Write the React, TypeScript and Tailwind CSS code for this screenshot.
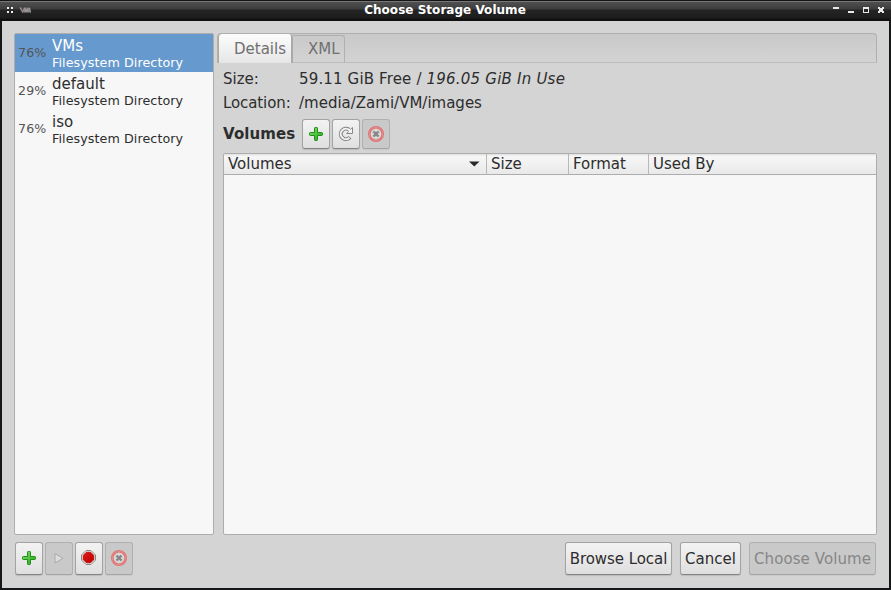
import React from "react";

const raised =
  "border border-[#a3a3a3] border-b-[#858585] bg-linear-to-b from-[#f3f3f3] to-[#dfdfdf] shadow-[0_1px_1px_rgba(0,0,0,0.12)]";
const flat = "border border-[#b0b0b0] border-b-[#a5a5a5] bg-[#c9c9c9] shadow-[0_1px_1px_rgba(0,0,0,0.06)]";

function PlusIcon() {
  return (
    <svg width="16" height="16" viewBox="0 0 16 16">
      <defs>
        <linearGradient id="plus" x1="0" y1="0" x2="1" y2="1">
          <stop offset="0" stopColor="#8be070" />
          <stop offset="1" stopColor="#1fa01a" />
        </linearGradient>
      </defs>
      <path
        d="M6.5 2.2Q6.5 1.5 7.2 1.5h1.600Q9.5 1.5 9.5 2.2V6.5h4.100q.9 0 .9.7v1.600q0 .7-.9.7H9.5v4.300q0 .7-.7.7H7.200q-.7 0-.7-.7V9.5H2.400q-.9 0-.9-.7V7.2q0-.7.9-.7h4.100z"
        fill="url(#plus)"
        stroke="#17930f"
      />
    </svg>
  );
}

function RefreshIcon() {
  return (
    <svg width="16" height="16" viewBox="0 0 16 16" fill="none">
      <path d="M12 11.300A5.200 5.200 0 1 1 11 3.700" stroke="#868686" strokeWidth="4" />
      <path d="M8.700 7.500h5.800V1.500L12.500 3.200 10.800 5.400z" fill="#f2f2f2" stroke="#868686" strokeLinejoin="round" />
      <path d="M11.400 11.800A5.200 5.200 0 1 1 11.400 4.100l1.300 1.500" stroke="#f2f2f2" strokeWidth="2" />
    </svg>
  );
}

function DeleteIcon() {
  return (
    <svg width="16" height="16" viewBox="0 0 16 16" fill="none">
      <circle cx="8" cy="8" r="6.700" fill="#d9d6d6" stroke="#df7272" strokeWidth="2.600" />
      <circle cx="8" cy="8" r="6.700" stroke="#e79696" strokeWidth="0.7" />
      <path d="M5.500 5.500l5 5M10.500 5.500l-5 5" stroke="#858585" strokeWidth="2.400" />
    </svg>
  );
}

function PlayIcon() {
  return (
    <svg width="16" height="16" viewBox="0 0 16 16">
      <path d="M4 3.500v9.500L12 8.300z" fill="#dcdcdc" stroke="#aaa" strokeLinejoin="round" />
    </svg>
  );
}

function StopIcon() {
  return (
    <svg width="16" height="16" viewBox="0 0 16 16">
      <defs>
        <linearGradient id="stop" x1="0" y1="0" x2="1" y2="1">
          <stop offset="0" stopColor="#e81717" />
          <stop offset="1" stopColor="#b80000" />
        </linearGradient>
      </defs>
      <path d="M5 .5h5l4.500 4.500v5L10 14.500H5L.5 10V5z" fill="#f3f3f0" stroke="#858780" />
      <path d="M5.400 2.200h4.200l3.200 3.200v4.200l-3.200 3.200H5.400l-3.200-3.200V5.400z" fill="url(#stop)" stroke="#ad0000" strokeWidth="0.800" />
    </svg>
  );
}

function IconButton({ tall, disabled, children }: { tall?: boolean; disabled?: boolean; children: React.ReactNode }) {
  return (
    <button
      disabled={disabled}
      className={`flex w-7 items-center justify-center rounded-[3px] ${tall ? "h-[33px] pb-px" : "h-[30px]"} ${disabled ? flat : raised}`}
    >
      {children}
    </button>
  );
}

function TextButton({ width, disabled, children }: { width: string; disabled?: boolean; children: string }) {
  return (
    <button
      disabled={disabled}
      className={`flex h-[33px] items-center justify-center rounded-[3px] pt-px whitespace-nowrap ${width} ${disabled ? `${flat} text-[#868686]` : raised}`}
    >
      {children}
    </button>
  );
}

const pools = [
  { used: "76%", name: "VMs", selected: true },
  { used: "29%", name: "default", selected: false },
  { used: "76%", name: "iso", selected: false },
];

function TitleBar() {
  return (
    <header className="flex h-[21px] shrink-0 items-center justify-between bg-[linear-gradient(#151515_0_1px,#77777a_1px_2px,#505050_2px,#3d3d3d_9px,#242424_10px,#1d1d1d_18px,#111_19px)] pr-[6px] pl-[7px]">
      <svg width="175" height="21" viewBox="0 0 175 21" shapeRendering="crispEdges">
        <path d="M0 7h2v2H0zM4 7h2v2H4zM0 11h2v2H0zM4 11h2v2H4z" fill="#eee" />
        <g shapeRendering="auto" fill="none">
          <path d="M12.500 7.500h2l1.500 3.500 1.500-3.500h5.500l1 5h-8.500z" fill="#777" />
          <path d="M13 7.500l2.500 4.500 2-4.500" stroke="#9b8585" strokeWidth="1.200" />
          <path d="M18 12.500v-4l1.500 3 1.500-3v4M22.500 8l1 4.500" stroke="#aaa" strokeWidth="0.800" />
        </g>
      </svg>
      <h1 className="-translate-x-px -translate-y-px text-[12px] font-bold leading-5 tracking-[0.030px] text-white">Choose Storage Volume</h1>
      <svg width="175" height="21" viewBox="0 0 175 21" shapeRendering="crispEdges" fill="#e8e8e8">
        <path d="M123 7h6v2h-6zM138 11h6v2h-6zM153 7h6v6h-6z" />
        <path d="M154 9h4v3h-4z" fill="#252525" />
        <path d="M168 7h2v1h2V7h2v2h-1v2h1v2h-2v-1h-2v1h-2v-2h1V9h-1z" />
      </svg>
    </header>
  );
}

function Sidebar() {
  return (
    <aside className="flex w-[200px] shrink-0 flex-col">
      <ul className="h-[502px] rounded-[2px] border border-[#adadad] bg-[#f7f7f7]">
        {pools.map((p) => (
          <li key={p.name} className={`flex h-[38px] items-center pl-[3px] ${p.selected ? "bg-[#6699cd] text-white" : ""}`}>
            <span className="w-[34px] text-[12.600px] tracking-[0.150px] text-[#555]">{p.used}</span>
            <div className="pt-[2px]">
              <div className="h-[20px] text-[15px] leading-[20px]">{p.name}</div>
              <div className="h-[16px] text-[12.700px] leading-[14px] tracking-[0.080px]">Filesystem Directory</div>
            </div>
          </li>
        ))}
      </ul>
      <div className="mt-[7px] ml-px flex gap-[2px]">
        <IconButton tall><PlusIcon /></IconButton>
        <IconButton tall disabled><PlayIcon /></IconButton>
        <IconButton tall><StopIcon /></IconButton>
        <IconButton tall disabled><DeleteIcon /></IconButton>
      </div>
    </aside>
  );
}

function Details() {
  return (
    <main className="ml-[3px] flex w-[660px] flex-col">
      <nav className="flex h-[30px] rounded-t-[4px] border border-[#b0b0b0] border-b-[#bdbdbd] bg-linear-to-b from-[#c9c9c9] to-[#d3d3d3] text-[#707070]">
        <div className="h-[29px] w-[75px] rounded-t-[4px] border-x border-r-2 border-[#aaa] bg-linear-to-b from-[#fcfcfc] to-[#e6e6e6] pl-[15px] leading-[30px]">Details</div>
        <div className="mt-px h-[27px] w-[52px] rounded-tr-[3px] border-t border-r border-[#b0b0b0] pl-[15px] leading-[26px]">XML</div>
      </nav>
      <section className="pl-[6px]">
        <dl className="grid grid-cols-[76px_1fr] pt-[4px] leading-6">
          <dt>Size:</dt>
          <dd className="tracking-[0.150px]">59.11 GiB Free / <i className="tracking-[0.220px]">196.05 GiB In Use</i></dd>
          <dt className="tracking-[-0.100px]">Location:</dt>
          <dd>/media/Zami/VM/images</dd>
        </dl>
        <div className="mt-[4px] flex gap-[2px]">
          <h2 className="w-[77px] font-bold leading-[30px] tracking-[0.100px]">Volumes</h2>
          <IconButton><PlusIcon /></IconButton>
          <IconButton><RefreshIcon /></IconButton>
          <IconButton disabled><DeleteIcon /></IconButton>
        </div>
        <div className="mt-[4px] h-[382px] w-[654px] rounded-[2px] border border-[#adadad] bg-[#f7f7f7]">
          <div className="grid h-[21px] grid-cols-[263px_82px_80px_1fr] border-b border-[#adadad] bg-[linear-gradient(#e4e4e4_0_1px,#f7f7f7_2px,#e9e9e9)] leading-[20px]">
            <div className="flex items-center justify-between border-r border-[#b8b8b8] pr-[6px] pl-[4px]">
              <span className="h-5">Volumes</span>
              <svg width="11" height="6" viewBox="0 0 11 6"><path d="M0 .5h10.500l-5.250 5z" fill="#2b2b2b" /></svg>
            </div>
            <div className="border-r border-[#b8b8b8] pl-[4px]">Size</div>
            <div className="border-r border-[#b8b8b8] pl-[4px]">Format</div>
            <div className="pl-[4px]">Used By</div>
          </div>
        </div>
      </section>
      <footer className="mt-[7px] mr-px flex justify-end gap-2">
        <TextButton width="w-[107px] tracking-[-0.050px]">Browse Local</TextButton>
        <TextButton width="w-[61px]">Cancel</TextButton>
        <TextButton width="w-[127px] tracking-[0.080px]" disabled>Choose Volume</TextButton>
      </footer>
    </main>
  );
}

export default function App() {
  return (
    <div className="flex h-[590px] w-[891px] flex-col overflow-hidden bg-[#161719] font-['DejaVu_Sans',sans-serif] text-[15px] text-[#2d2d2d]">
      <TitleBar />
      <div className="mr-[2px] ml-[2px] flex h-[567px] bg-[#d4d4d4] pt-3 pl-3">
        <Sidebar />
        <Details />
      </div>
    </div>
  );
}
